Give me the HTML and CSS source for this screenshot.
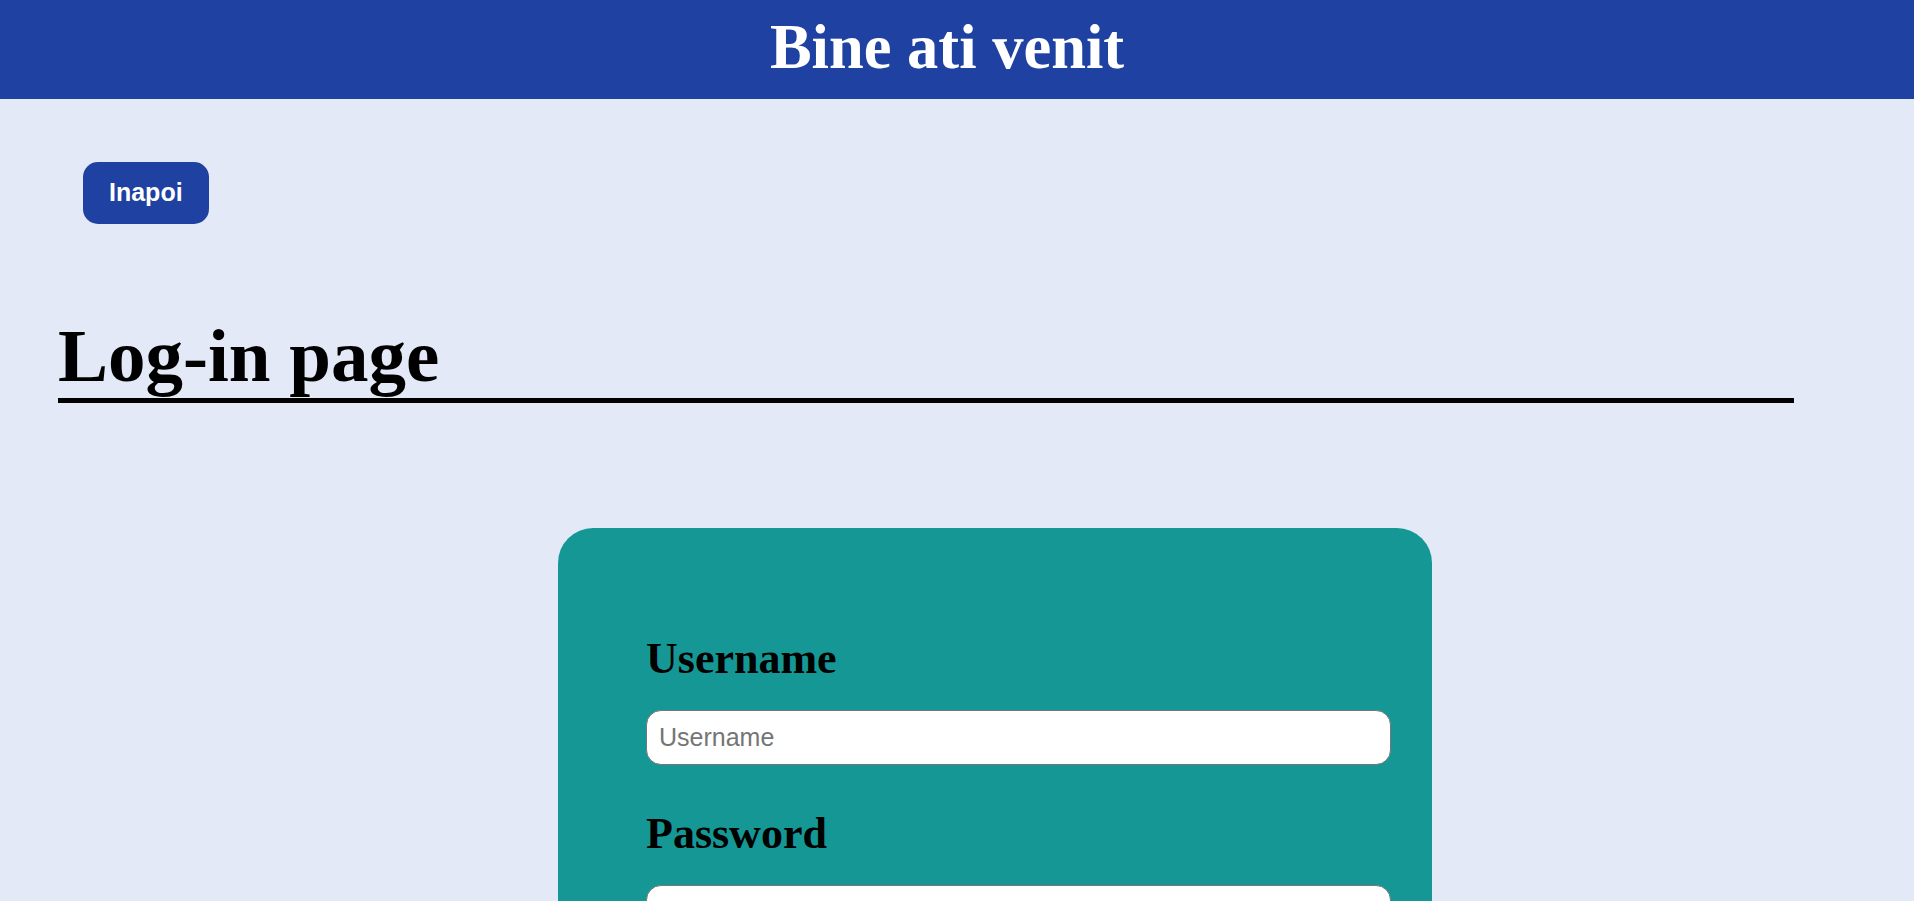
FILE: index.html
```html
<!DOCTYPE html>
<html lang="ro">
<head>
<meta charset="utf-8">
<title>Log-in page</title>
<link rel="stylesheet" href="styles.css">
</head>
<body>
<header class="topbar">
  <h1 class="site-title">Bine ati venit</h1>
</header>
<main class="page">
  <div class="back-row">
    <button class="back-btn" type="button">Inapoi</button>
  </div>
  <h1 class="page-title">Log-in page</h1>
  <section class="login-card">
    <form class="login-form">
      <label class="field-label" for="username">Username</label>
      <input class="field-input" id="username" type="text" placeholder="Username">
      <label class="field-label" for="password">Password</label>
      <input class="field-input" id="password" type="password">
      <button class="submit-btn" type="submit">Log in</button>
    </form>
  </section>
</main>
</body>
</html>
```
FILE: styles.css
```css
html, body {
  margin: 0;
  padding: 0;
}

body {
  background: #e3e9f7;
  font-family: "Liberation Serif", "Times New Roman", serif;
  color: #000;
}

.topbar {
  height: 99px;
  box-sizing: border-box;
  background: #1f41a1;
  padding: 12px 20px 0 0;
}

.site-title {
  margin: 0;
  text-align: center;
  color: #fff;
  font-size: 62.5px;
  font-weight: bold;
  line-height: 71px;
}

.page {
  padding: 0 0 0 58px;
}

.back-row {
  padding-top: 63px;
  padding-left: 25px;
}

.back-btn {
  box-sizing: border-box;
  height: 62px;
  padding: 0 26px 2px;
  border: none;
  border-radius: 15px;
  background: #1f41a1;
  color: #fff;
  font-family: "Liberation Sans", Arial, sans-serif;
  font-size: 25px;
  font-weight: bold;
  line-height: 60px;
  cursor: pointer;
}

.page-title {
  width: 1736px;
  margin: 89px 0 0;
  font-size: 75px;
  font-weight: bold;
  line-height: 85px;
  border-bottom: 5px solid #000;
}

.login-card {
  width: 874px;
  box-sizing: border-box;
  margin: 125px 0 60px 500px;
  padding: 106px 41px 80px 88px;
  background: #159895;
  border-radius: 35px;
}

.login-form {
  display: flex;
  flex-direction: column;
}

.field-label {
  font-size: 44px;
  font-weight: bold;
  line-height: 50px;
  margin-bottom: 26px;
}

.field-input {
  box-sizing: border-box;
  width: 100%;
  height: 55px;
  margin: 0 0 44px;
  padding: 0 12px;
  border: 1px solid #767676;
  border-radius: 15px;
  background: #fff;
  font-family: "Liberation Sans", Arial, sans-serif;
  font-size: 25px;
  color: #000;
}

.field-input::placeholder {
  color: #757575;
}

.submit-btn {
  align-self: flex-start;
  height: 62px;
  padding: 0 26px 2px;
  border: none;
  border-radius: 15px;
  background: #1f41a1;
  color: #fff;
  font-family: "Liberation Sans", Arial, sans-serif;
  font-size: 25px;
  font-weight: bold;
  line-height: 60px;
}
```
